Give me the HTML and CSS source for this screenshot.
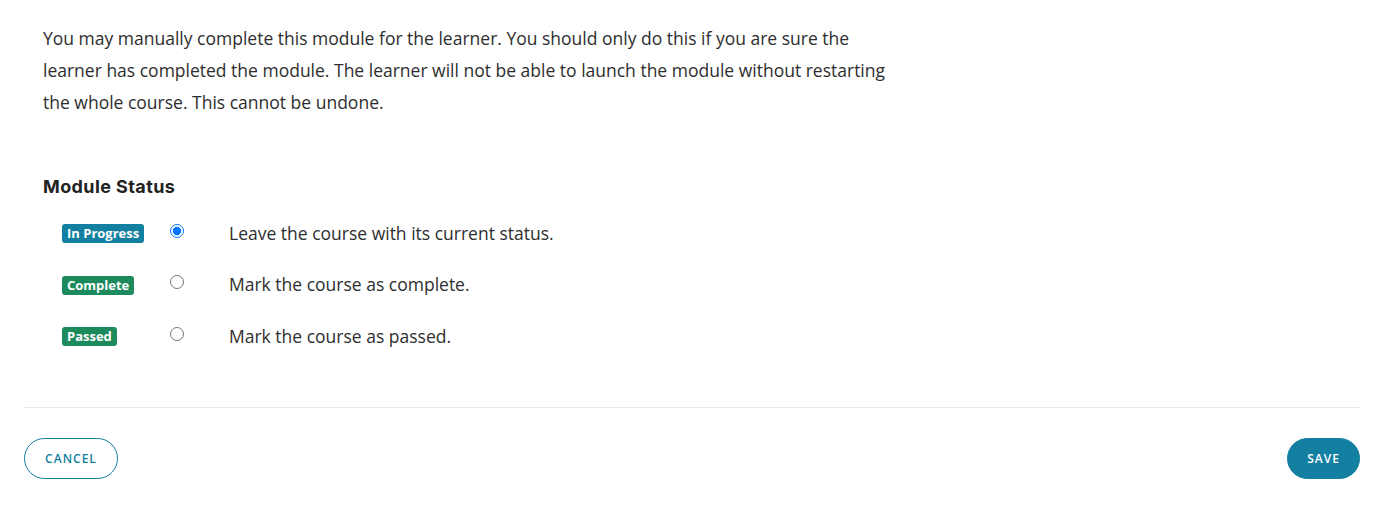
FILE: index.html
```html
<!DOCTYPE html>
<html lang="en">
<head>
<meta charset="utf-8">
<title>Module Status</title>
<link rel="stylesheet" href="styles.css">
</head>
<body>
<div class="dialog">
  <div class="content">
    <p class="intro">You may manually complete this module for the learner. You should only do this if you are sure the learner has completed the module. The learner will not be able to launch the module without restarting the whole course. This cannot be undone.</p>
    <h3 class="section-title">Module Status</h3>
    <div class="status-list">
      <label class="status-row">
        <span class="badge badge-blue">In Progress</span>
        <input class="radio" type="radio" name="status" checked>
        <span class="status-text">Leave the course with its current status.</span>
      </label>
      <label class="status-row">
        <span class="badge badge-green">Complete</span>
        <input class="radio" type="radio" name="status">
        <span class="status-text">Mark the course as complete.</span>
      </label>
      <label class="status-row">
        <span class="badge badge-green">Passed</span>
        <input class="radio" type="radio" name="status">
        <span class="status-text">Mark the course as passed.</span>
      </label>
    </div>
  </div>
  <div class="footer">
    <button class="btn btn-outline" type="button">Cancel</button>
    <button class="btn btn-primary" type="button">Save</button>
  </div>
</div>
</body>
</html>
```

FILE: styles.css
```css
html, body {
  margin: 0;
  padding: 0;
  background: #ffffff;
}

body {
  font-family: "Open Sans", "Noto Sans", sans-serif;
  color: #2e2e2e;
}

.dialog {
  padding: 22px 17px 0 24px;
}

.content {
  padding: 0 19px;
  border-bottom: 1px solid #e8e8e8;
  padding-bottom: 44px;
}

.intro {
  margin: 0;
  max-width: 848px;
  font-size: 17.5px;
  line-height: 32px;
}

.section-title {
  margin: 57px 0 0;
  font-family: "Inter", "Noto Sans", sans-serif;
  font-weight: 700;
  font-size: 18px;
  letter-spacing: 0.4px;
  line-height: 24px;
  color: #222222;
}

.status-list {
  margin-top: 9px;
  padding-left: 19px;
  display: flex;
  flex-direction: column;
}

.status-row {
  display: grid;
  grid-template-columns: 108px 59px auto;
  align-items: center;
  height: 51.5px;
}

.badge {
  justify-self: start;
  font-size: 13px;
  font-weight: 700;
  line-height: 19px;
  color: #ffffff;
  padding: 0 5px;
  border-radius: 3px;
}

.badge-blue {
  background: #137fa1;
}

.badge-green {
  background: #1d8a5d;
}

.radio {
  margin: 0 0 6px 0;
  width: 14px;
  height: 14px;
}

.status-text {
  font-size: 17.5px;
  line-height: 24px;
  margin-bottom: 2px;
}

.footer {
  display: flex;
  justify-content: space-between;
  align-items: center;
  padding-top: 30px;
}

.btn {
  font-family: "Open Sans", "Noto Sans", sans-serif;
  font-size: 12px;
  font-weight: 600;
  letter-spacing: 1px;
  text-transform: uppercase;
  height: 41px;
  border-radius: 21px;
  cursor: pointer;
}

.btn-outline {
  width: 94px;
  background: #ffffff;
  color: #137fa1;
  border: 1px solid #137fa1;
}

.btn-primary {
  width: 73px;
  background: #137fa1;
  color: #ffffff;
  border: 1px solid #137fa1;
}
```
